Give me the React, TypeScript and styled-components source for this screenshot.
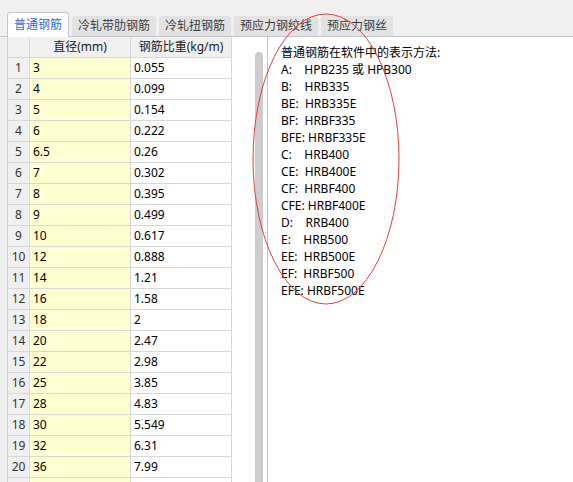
import React from 'react'
import styled, { createGlobalStyle } from 'styled-components'

const GlobalStyle = createGlobalStyle`
  html, body {
    margin: 0;
    padding: 0;
    background: #f0f0f0;
  }
  body {
    font-family: "Noto Sans", "Noto Sans CJK SC", sans-serif;
    font-size: 12px;
    color: #000;
  }
`

const tabs = ['普通钢筋', '冷轧带肋钢筋', '冷轧扭钢筋', '预应力钢绞线', '预应力钢丝']

const rows: [string, string][] = [
  ['3', '0.055'],
  ['4', '0.099'],
  ['5', '0.154'],
  ['6', '0.222'],
  ['6.5', '0.26'],
  ['7', '0.302'],
  ['8', '0.395'],
  ['9', '0.499'],
  ['10', '0.617'],
  ['12', '0.888'],
  ['14', '1.21'],
  ['16', '1.58'],
  ['18', '2'],
  ['20', '2.47'],
  ['22', '2.98'],
  ['25', '3.85'],
  ['28', '4.83'],
  ['30', '5.549'],
  ['32', '6.31'],
  ['36', '7.99']
]

const notes = [
  '普通钢筋在软件中的表示方法:',
  'A:    HPB235 或 HPB300',
  'B:    HRB335',
  'BE:  HRB335E',
  'BF:  HRBF335',
  'BFE: HRBF335E',
  'C:    HRB400',
  'CE:  HRB400E',
  'CF:  HRBF400',
  'CFE: HRBF400E',
  'D:    RRB400',
  'E:    HRB500',
  'EE:  HRB500E',
  'EF:  HRBF500',
  'EFE: HRBF500E'
]

const App = () => (
  <Window>
    <GlobalStyle />
    <TabBar>
      {tabs.map((t, i) => (
        <Tab key={t} $active={i === 0}>
          {t}
        </Tab>
      ))}
    </TabBar>
    <Body>
      <GridPane>
        <Table>
          <HeaderCell />
          <HeaderCell>直径(mm)</HeaderCell>
          <HeaderCell>钢筋比重(kg/m)</HeaderCell>
          {rows.map(([d, w], i) => (
            <React.Fragment key={i}>
              <RowNumber>{i + 1}</RowNumber>
              <Cell $tint="#ffffd2">{d}</Cell>
              <Cell $tint="#fff">{w}</Cell>
            </React.Fragment>
          ))}
          {/* next row, scrolled just past the bottom edge */}
          <RowNumber />
          <Cell $tint="#ffffd2" />
          <Cell $tint="#fff" />
        </Table>
        <ScrollGutter>
          <Thumb />
        </ScrollGutter>
      </GridPane>
      <NotePanel>
        {notes.map((n) => (
          <NoteLine key={n}>{n}</NoteLine>
        ))}
      </NotePanel>
    </Body>
    <Mark width="152" height="296" viewBox="0 0 152 296">
      <ellipse cx="75" cy="147" rx="73" ry="145" fill="none" stroke="#ea3c3c" strokeWidth="1" />
    </Mark>
  </Window>
)

export default App

const Window = styled.div`
  position: relative;
  width: 573px;
  height: 482px;
  overflow: hidden;
  background: #f0f0f0;
  display: flex;
  flex-direction: column;
`

const TabBar = styled.div`
  display: flex;
  align-items: flex-end;
  gap: 3px;
  height: 37px;
  padding-left: 7px;
  box-sizing: border-box;
  border-bottom: 1px solid #c3c6ca;
`

const Tab = styled.div<{ $active: boolean }>`
  box-sizing: border-box;
  padding: 0 6px;
  height: ${({ $active }) => ($active ? '25px' : '20px')};
  line-height: ${({ $active }) => ($active ? '23px' : '20px')};
  margin-bottom: ${({ $active }) => ($active ? '-1px' : '0')};
  background: ${({ $active }) => ($active ? '#fff' : '#e2e2e2')};
  color: ${({ $active }) => ($active ? '#2a6fd8' : '#3c3c3c')};
  border: ${({ $active }) => ($active ? '1px solid #c8c8c8' : 'none')};
  border-bottom: none;
  border-radius: 3px 3px 0 0;
  white-space: nowrap;
`

const Body = styled.div`
  flex: 1;
  display: flex;
  padding-left: 7px;
  min-height: 0;
`

const GridPane = styled.div`
  display: flex;
  width: 259px;
  background: #fff;
  border-left: 1px solid #cfcfcf;
  border-right: 1px solid #c6c6c6;
`

const Table = styled.div`
  display: grid;
  grid-template-columns: 22px 101px 101px;
  grid-auto-rows: 21px;
  align-content: start;
`

const cellBase = `
  box-sizing: border-box;
  border-right: 1px solid #d8d8d8;
  border-bottom: 1px solid #d8d8d8;
  line-height: 20px;
  white-space: nowrap;
  overflow: hidden;
`

const HeaderCell = styled.div`
  ${cellBase}
  background: #f0f0f0;
  text-align: center;
  color: #1a1a1a;
`

const RowNumber = styled.div`
  ${cellBase}
  background: #f0f0f0;
  text-align: center;
  color: #333;
`

const Cell = styled.div<{ $tint: string }>`
  ${cellBase}
  background: ${({ $tint }) => $tint};
  padding-left: 3px;
`

const ScrollGutter = styled.div`
  flex: 1;
  display: flex;
  padding: 15px 2px 0 23px;
`

const Thumb = styled.div`
  width: 8px;
  height: 100%;
  background: #cdcdcd;
  border-radius: 4px 4px 0 0;
`

const NotePanel = styled.div`
  flex: 1;
  background: #fff;
  padding: 7px 0 0 13px;
`

const NoteLine = styled.div`
  line-height: 17px;
  white-space: pre;
`

const Mark = styled.svg`
  position: absolute;
  left: 251px;
  top: 12px;
  pointer-events: none;
`
